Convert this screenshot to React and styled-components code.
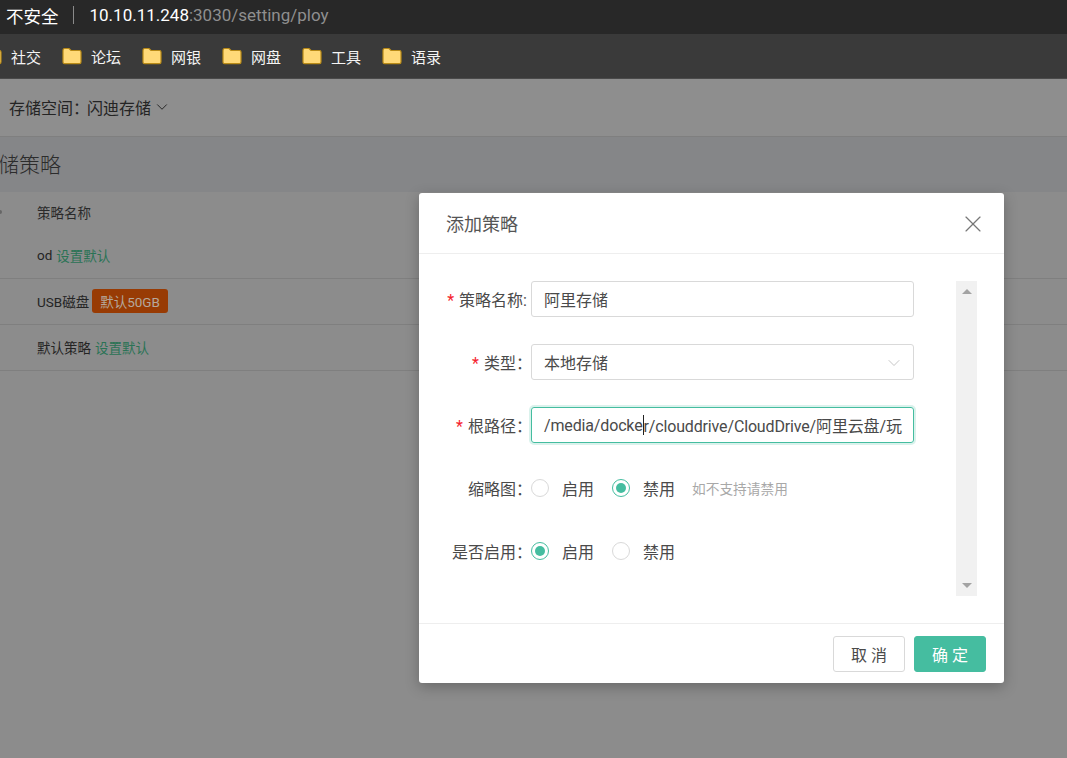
import styled, { createGlobalStyle } from "styled-components";
import { X, ChevronDown } from "lucide-react";

const bookmarks = ["论坛", "网银", "网盘", "工具", "语录"];
const policies = [
  { name: "od", action: "设置默认" },
  { name: "USB磁盘", tag: "默认50GB" },
  { name: "默认策略", action: "设置默认" },
];

function FolderIcon() {
  return (
    <svg width="20" height="18" viewBox="0 0 20 18">
      <path
        d="M1 3.5C1 2.4 1.6 1.5 2.6 1.5H7L9 3.5H17.5C18.4 3.5 19 4.2 19 5V15C19 16 18.4 16.6 17.5 16.6H2.5C1.6 16.6 1 16 1 15Z"
        fill="#ffd978"
        stroke="#b98a16"
        strokeWidth="1.2"
      />
    </svg>
  );
}

function Radio({ checked, label }) {
  return (
    <RadioItem>
      <RadioCircle $checked={checked} />
      <span>{label}</span>
    </RadioItem>
  );
}

export default function App() {
  return (
    <>
      <GlobalStyle />
      <AddressBar>
        <Insecure>不安全</Insecure>
        <Divider />
        <Url>
          <b>10.10.11.248</b>:3030/setting/ploy
        </Url>
      </AddressBar>
      <BookmarkBar>
        <Bookmark>
          <FolderIcon />
          社交
        </Bookmark>
        {bookmarks.map((name) => (
          <Bookmark key={name}>
            <FolderIcon />
            {name}
          </Bookmark>
        ))}
      </BookmarkBar>
      <Page>
        <TopBar>
          存储空间：
          <SpaceName>闪迪存储</SpaceName>
          <ChevronDown size={18} strokeWidth={1.3} />
        </TopBar>
        <TitleBar>
          <h1>存储策略</h1>
        </TitleBar>
        <TableHead>
          <Dot />
          策略名称
        </TableHead>
        {policies.map((p) => (
          <TableRow key={p.name}>
            {p.name}
            {p.action && <ActionLink>{p.action}</ActionLink>}
            {p.tag && <Tag>{p.tag}</Tag>}
          </TableRow>
        ))}
      </Page>
      <Modal>
        <ModalHeader>
          添加策略
          <X size={28} strokeWidth={1} color="#777" />
        </ModalHeader>
        <ModalBody>
          <Form>
            <Row>
              <Label $required $tight>策略名称:</Label>
              <Field>阿里存储</Field>
            </Row>
            <Row>
              <Label $required>类型：</Label>
              <Field>
                本地存储
                <SelectArrow>
                  <ChevronDown size={20} strokeWidth={1} />
                </SelectArrow>
              </Field>
            </Row>
            <Row>
              <Label $required>根路径：</Label>
              <Field $focused>
                /media/docke<Caret />r/clouddrive/CloudDrive/阿里云盘/玩
              </Field>
            </Row>
            <Row>
              <Label>缩略图：</Label>
              <Radio label="启用" />
              <Radio checked label="禁用" />
              <Hint>如不支持请禁用</Hint>
            </Row>
            <Row>
              <Label>是否启用：</Label>
              <Radio checked label="启用" />
              <Radio label="禁用" />
            </Row>
          </Form>
          <Scrollbar>
            <ScrollArrow />
            <ScrollArrow $down />
          </Scrollbar>
        </ModalBody>
        <ModalFooter>
          <Button>取 消</Button>
          <Button $primary>确 定</Button>
        </ModalFooter>
      </Modal>
    </>
  );
}

const GlobalStyle = createGlobalStyle`
  html, body {
    margin: 0;
    height: 100%;
    overflow: hidden;
    background: #8c8c8c;
    font-family: Roboto, "Noto Sans CJK SC", sans-serif;
  }
`;

const AddressBar = styled.div`
  height: 34px;
  box-sizing: border-box;
  background: #282828;
  display: flex;
  align-items: center;
  padding: 0 0 4px 6px;
  font-size: 17px;
`;

const Insecure = styled.span`
  color: #fff;
  font-size: 17.5px;
`;

const Divider = styled.span`
  width: 1px;
  height: 18px;
  background: #8a8a8a;
  margin: 0 16px 0 14px;
`;

const Url = styled.span`
  color: #8f8f8f;
  b {
    font-weight: 400;
    color: #fff;
  }
`;

const BookmarkBar = styled.div`
  height: 45px;
  box-sizing: border-box;
  background: #3a3a3a;
  border-bottom: 1px solid #4a4a4a;
  display: flex;
  align-items: center;
  margin-left: -18px;
  gap: 30px;
`;

const Bookmark = styled.div`
  display: flex;
  align-items: center;
  gap: 9px;
  color: #f4f4f4;
  font-size: 15px;
  width: 50px;
  white-space: nowrap;
  svg {
    flex: none;
  }
`;

const Page = styled.main`
  color: #242424;
  font-size: 14px;
`;

const TopBar = styled.div`
  height: 58px;
  box-sizing: border-box;
  background: #8e8e8e;
  border-bottom: 1px solid #7f7f7f;
  display: flex;
  align-items: center;
  padding: 0 0 2px 9px;
  font-size: 16px;
`;

const SpaceName = styled.span`
  margin: 0 2px 0 -2px;
`;

const TitleBar = styled.div`
  height: 55px;
  box-sizing: border-box;
  padding-bottom: 3px;
  background: #858688;
  display: flex;
  align-items: center;
  overflow: hidden;
  h1 {
    margin: 0 0 0 -23px;
    font-size: 21px;
    font-weight: 300;
    color: #2c2c2c;
  }
`;

const TableHead = styled.div`
  position: relative;
  height: 41px;
  box-sizing: border-box;
  padding: 0 0 1px 37px;
  display: flex;
  align-items: center;
  font-size: 13.5px;
  color: #2a2a2a;
`;

const Dot = styled.span`
  position: absolute;
  left: -2px;
  top: 18px;
  width: 4px;
  height: 4px;
  border-radius: 50%;
  background: #666;
`;

const TableRow = styled.div`
  height: 46px;
  box-sizing: border-box;
  border-bottom: 1px solid #7f7f7f;
  display: flex;
  align-items: center;
  padding: 0 0 2px 37px;
  font-size: 13.5px;
`;

const ActionLink = styled.span`
  color: #2a7355;
  margin-left: 4px;
`;

const Tag = styled.span`
  margin-left: 3px;
  background: #983b04;
  color: #b5a89c;
  border-radius: 3px;
  height: 24px;
  padding: 0 8px;
  display: flex;
  align-items: center;
`;

const Modal = styled.section`
  position: absolute;
  left: 419px;
  top: 193px;
  width: 585px;
  height: 490px;
  background: #fff;
  border-radius: 3px;
  box-shadow: 0 4px 14px rgba(0, 0, 0, 0.25);
  display: flex;
  flex-direction: column;
`;

const ModalHeader = styled.header`
  height: 61px;
  box-sizing: border-box;
  border-bottom: 1px solid #eee;
  display: flex;
  align-items: center;
  justify-content: space-between;
  padding: 0 17px 0 27px;
  font-size: 18px;
  color: #555;
  svg {
    margin-top: 1px;
  }
`;

const ModalBody = styled.div`
  flex: 1;
  display: flex;
  justify-content: space-between;
  padding: 27px 27px 27px 0;
`;

const Form = styled.div`
  display: flex;
  flex-direction: column;
  gap: 27px;
`;

const Row = styled.div`
  height: 36px;
  display: flex;
  align-items: center;
  font-size: 16px;
  color: #4a4a4a;
`;

const Label = styled.label`
  width: 113px;
  margin-right: -1px;
  flex: none;
  box-sizing: border-box;
  padding-right: ${(p) => (p.$tight ? "5px" : "0")};
  text-align: right;
  ${(p) =>
    p.$required &&
    `&::before {
      content: "*";
      color: #f5222d;
      margin-right: 5px;
    }`}
`;

const Field = styled.div`
  position: relative;
  width: 383px;
  height: 36px;
  box-sizing: border-box;
  padding: 0 12px;
  display: flex;
  align-items: center;
  white-space: nowrap;
  overflow: hidden;
  border-radius: 3px;
  letter-spacing: ${(p) => (p.$focused ? "-0.15px" : "0")};
  border: 1px solid ${(p) => (p.$focused ? "#45bda0" : "#d9d9d9")};
  box-shadow: ${(p) => (p.$focused ? "0 0 0 2px rgba(69, 189, 160, 0.2)" : "none")};
`;

const Caret = styled.span`
  flex: none;
  width: 1px;
  height: 20px;
  background: #222;
`;

const SelectArrow = styled.span`
  position: absolute;
  right: 9px;
  top: 8px;
  color: #bbb;
  display: flex;
`;

const RadioItem = styled.span`
  display: flex;
  align-items: center;
  gap: 13px;
  margin-right: 18px;
`;

const RadioCircle = styled.span`
  width: 18px;
  height: 18px;
  box-sizing: border-box;
  border-radius: 50%;
  background: #fff;
  border: 1px solid ${(p) => (p.$checked ? "#45bda0" : "#d9d9d9")};
  display: flex;
  align-items: center;
  justify-content: center;
  &::after {
    content: "";
    width: 10px;
    height: 10px;
    border-radius: 50%;
    background: ${(p) => (p.$checked ? "#45bda0" : "transparent")};
  }
`;

const Hint = styled.span`
  margin-left: -1px;
  font-size: 13.7px;
  color: #a8a8a8;
`;

const Scrollbar = styled.div`
  width: 21px;
  height: 315px;
  background: #f1f1f1;
  display: flex;
  flex-direction: column;
  justify-content: space-between;
  align-items: center;
  padding: 8px 0;
  box-sizing: border-box;
`;

const ScrollArrow = styled.span`
  width: 0;
  height: 0;
  border-left: 5px solid transparent;
  border-right: 5px solid transparent;
  ${(p) =>
    p.$down ? "border-top: 5px solid #a3a3a3;" : "border-bottom: 5px solid #a3a3a3;"}
`;

const ModalFooter = styled.footer`
  height: 60px;
  box-sizing: border-box;
  border-top: 1px solid #eee;
  display: flex;
  justify-content: flex-end;
  align-items: center;
  gap: 9px;
  padding: 0 18px;
`;

const Button = styled.button`
  width: 72px;
  height: 36px;
  border-radius: 3px;
  font-family: inherit;
  font-size: 16px;
  border: 1px solid ${(p) => (p.$primary ? "#45bda0" : "#d9d9d9")};
  background: ${(p) => (p.$primary ? "#45bda0" : "#fff")};
  color: ${(p) => (p.$primary ? "#fff" : "#4a4a4a")};
`;
